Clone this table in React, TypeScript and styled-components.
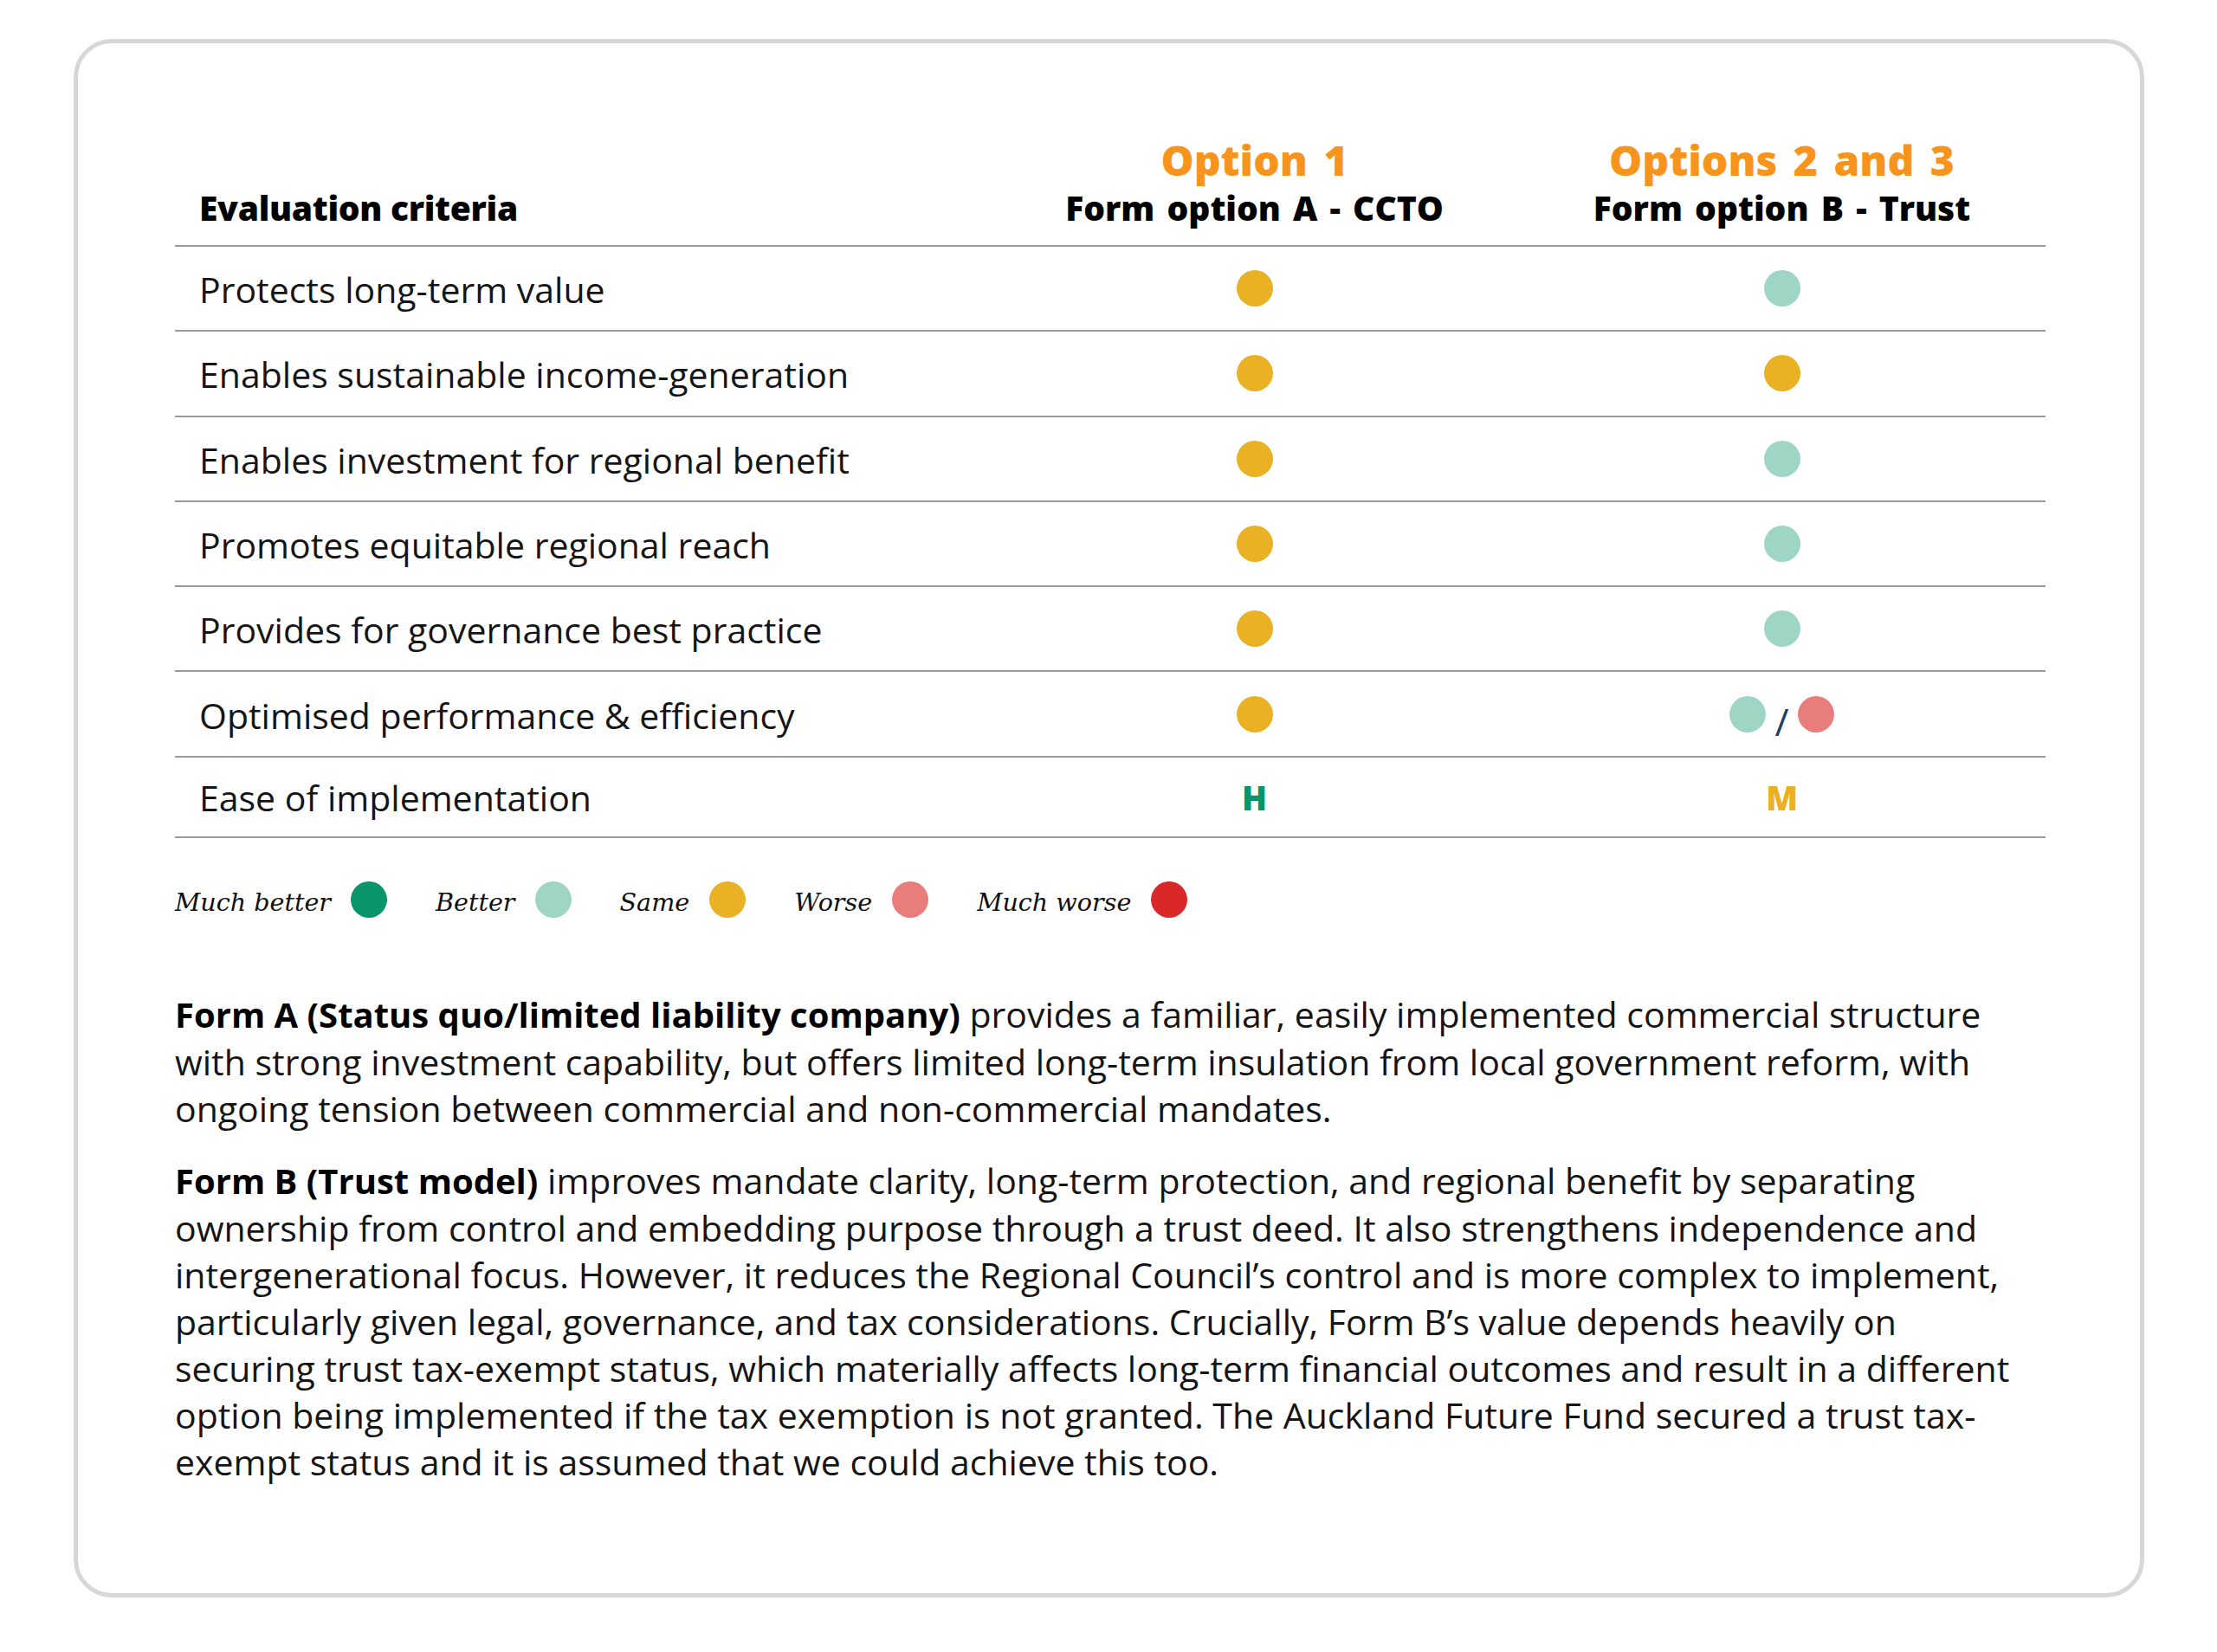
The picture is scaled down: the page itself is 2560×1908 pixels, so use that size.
import styled, { createGlobalStyle } from "styled-components";

const GlobalStyle = createGlobalStyle`
  html, body {
    margin: 0;
    padding: 0;
    background: #ffffff;
  }
  body {
    font-family: "Open Sans", Lato, sans-serif;
    color: #111111;
  }
`;

const colors = {
  muchBetter: "#0a9469",
  better: "#9fd5c5",
  same: "#e9b123",
  worse: "#e97d7c",
  muchWorse: "#da2729",
  orange: "#f7941e",
  line: "#9b9b9b",
  navy: "#1c3d6b",
};

type Rating = keyof Pick<
  typeof colors,
  "muchBetter" | "better" | "same" | "worse" | "muchWorse"
>;

const Page = styled.div`
  width: 2560px;
  height: 1908px;
  padding: 45px 0 0 85px;
  box-sizing: border-box;
`;

const Card = styled.section`
  width: 2391px;
  height: 1800px;
  box-sizing: border-box;
  border: 5px solid #d7d7d8;
  border-radius: 44px;
  padding: 0 110px 0 112px;
`;

const Table = styled.div`
  display: grid;
  grid-template-columns: 942px 609px 609px;
  width: 2160px;
`;

const HeadCell = styled.div<{ $center?: boolean }>`
  height: 235px;
  box-sizing: border-box;
  border-bottom: 2px solid ${colors.line};
  display: flex;
  flex-direction: column;
  justify-content: flex-end;
  align-items: ${(p) => (p.$center ? "center" : "flex-start")};
  padding: 0 0 21px ${(p) => (p.$center ? "0" : "28px")};
`;

const OptionTitle = styled.div`
  color: ${colors.orange};
  font-weight: 800;
  font-size: 48px;
  line-height: 56px;
  margin-bottom: 5px;
  word-spacing: 6px;
`;

const HeadLabel = styled.div<{ $wide?: boolean }>`
  font-weight: 800;
  font-size: 39px;
  line-height: 44px;
  color: #000000;
  word-spacing: ${(p) => (p.$wide ? "4px" : "0")};
  letter-spacing: ${(p) => (p.$wide ? "0" : "-0.3px")};
`;

const Cell = styled.div<{ $last?: boolean; $center?: boolean }>`
  height: ${(p) => (p.$last ? "93px" : "98.3px")};
  box-sizing: border-box;
  border-bottom: 2px solid ${colors.line};
  display: flex;
  align-items: center;
  justify-content: ${(p) => (p.$center ? "center" : "flex-start")};
  padding-left: ${(p) => (p.$center ? "0" : "28px")};
  gap: 10px;
`;

const Criterion = styled.span`
  font-size: 41px;
  font-weight: 400;
  color: #151515;
  margin-top: 2px;
`;

const Dot = styled.span<{ $rating: Rating }>`
  display: inline-block;
  flex-shrink: 0;
  width: 42px;
  height: 42px;
  border-radius: 50%;
  background: ${(p) => colors[p.$rating]};
`;

const Slash = styled.span`
  color: ${colors.navy};
  font-size: 44px;
  line-height: 1;
  margin-top: 16px;
  font-weight: 400;
`;

const Grade = styled.span<{ $color: string }>`
  color: ${(p) => p.$color};
  font-weight: 800;
  font-size: 38px;
  margin-top: 2px;
`;

const Legend = styled.div`
  display: flex;
  align-items: center;
  margin-top: 50px;
  height: 42px;
`;

const LegendItem = styled.div`
  display: flex;
  align-items: center;
  gap: 23px;
  margin-right: 56px;
`;

const LegendLabel = styled.span`
  font-family: "DejaVu Serif", "Liberation Serif", serif;
  font-style: italic;
  font-size: 28.6px;
  color: #111111;
  margin-top: 6px;
`;

const Notes = styled.div`
  margin-top: 84px;
  width: 2200px;
`;

const Note = styled.p`
  margin: 0 0 29px;
  font-size: 41px;
  line-height: 54px;
  color: #151515;
  white-space: nowrap;
  b {
    font-size: 40px;
    font-weight: 700;
    color: #000000;
  }
`;

const rows: { label: string; a: Rating[]; b: Rating[] }[] = [
  { label: "Protects long-term value", a: ["same"], b: ["better"] },
  { label: "Enables sustainable income-generation", a: ["same"], b: ["same"] },
  { label: "Enables investment for regional benefit", a: ["same"], b: ["better"] },
  { label: "Promotes equitable regional reach", a: ["same"], b: ["better"] },
  { label: "Provides for governance best practice", a: ["same"], b: ["better"] },
  { label: "Optimised performance & efficiency", a: ["same"], b: ["better", "worse"] },
];

const legend: { label: string; rating: Rating }[] = [
  { label: "Much better", rating: "muchBetter" },
  { label: "Better", rating: "better" },
  { label: "Same", rating: "same" },
  { label: "Worse", rating: "worse" },
  { label: "Much worse", rating: "muchWorse" },
];

function Dots({ list }: { list: Rating[] }) {
  return (
    <>
      {list.map((r, i) => (
        <span key={i} style={{ display: "contents" }}>
          {i > 0 && <Slash>/</Slash>}
          <Dot $rating={r} />
        </span>
      ))}
    </>
  );
}

export default function App() {
  return (
    <Page>
      <GlobalStyle />
      <Card>
        <Table>
          <HeadCell>
            <HeadLabel>Evaluation criteria</HeadLabel>
          </HeadCell>
          <HeadCell $center>
            <OptionTitle>Option 1</OptionTitle>
            <HeadLabel $wide>Form option A - CCTO</HeadLabel>
          </HeadCell>
          <HeadCell $center>
            <OptionTitle>Options 2 and 3</OptionTitle>
            <HeadLabel $wide>Form option B - Trust</HeadLabel>
          </HeadCell>

          {rows.map((row) => (
            <>
              <Cell key={row.label}>
                <Criterion>{row.label}</Criterion>
              </Cell>
              <Cell $center>
                <Dots list={row.a} />
              </Cell>
              <Cell $center>
                <Dots list={row.b} />
              </Cell>
            </>
          ))}

          <Cell $last>
            <Criterion>Ease of implementation</Criterion>
          </Cell>
          <Cell $last $center>
            <Grade $color={colors.muchBetter}>H</Grade>
          </Cell>
          <Cell $last $center>
            <Grade $color={colors.same}>M</Grade>
          </Cell>
        </Table>

        <Legend>
          {legend.map((item) => (
            <LegendItem key={item.label}>
              <LegendLabel>{item.label}</LegendLabel>
              <Dot $rating={item.rating} />
            </LegendItem>
          ))}
        </Legend>

        <Notes>
          <Note>
            <b>Form A (Status quo/limited liability company)</b> provides a
            familiar, easily implemented commercial structure
            <br />
            with strong investment capability, but offers limited long-term
            insulation from local government reform, with
            <br />
            ongoing tension between commercial and non-commercial mandates.
          </Note>
          <Note>
            <b>Form B (Trust model)</b> improves mandate clarity, long-term
            protection, and regional benefit by separating
            <br />
            ownership from control and embedding purpose through a trust deed.
            It also strengthens independence and
            <br />
            intergenerational focus. However, it reduces the Regional
            Council’s control and is more complex to implement,
            <br />
            particularly given legal, governance, and tax considerations.
            Crucially, Form B’s value depends heavily on
            <br />
            securing trust tax-exempt status, which materially affects
            long-term financial outcomes and result in a different
            <br />
            option being implemented if the tax exemption is not granted. The
            Auckland Future Fund secured a trust tax-
            <br />
            exempt status and it is assumed that we could achieve this too.
          </Note>
        </Notes>
      </Card>
    </Page>
  );
}
